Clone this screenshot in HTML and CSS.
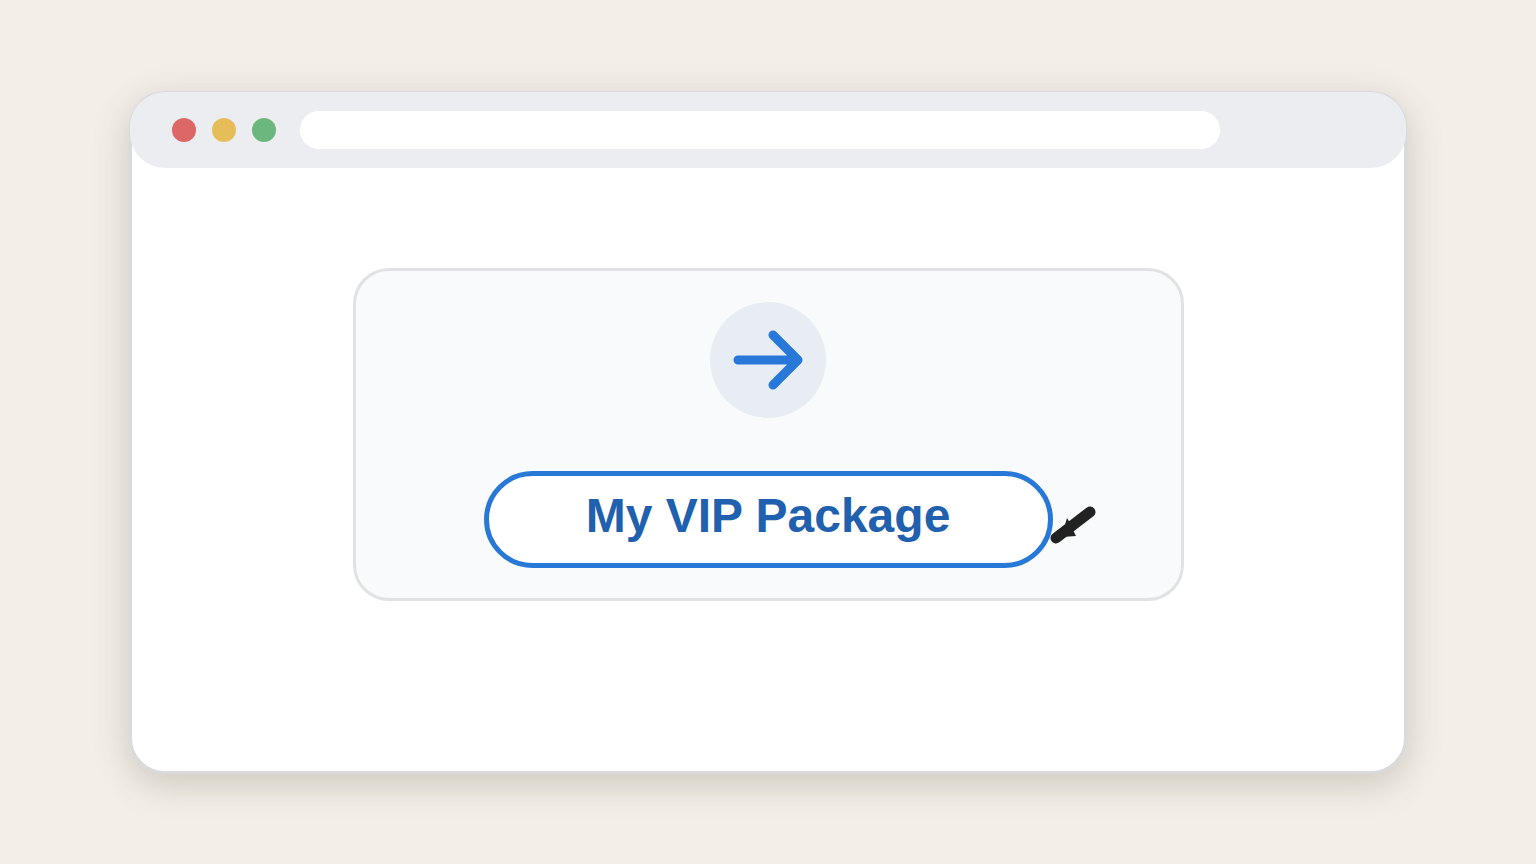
FILE: index.html
```html
<!DOCTYPE html>
<html lang="en">
<head>
  <meta charset="UTF-8" />
  <title>My VIP Package</title>
  <meta name="viewport" content="width=device-width, initial-scale=1.0" />
  <link rel="stylesheet" href="styles.css">
</head>
<body>
  <div class="window">
    <!-- Title bar -->
    <header class="title-bar">
      <div class="dots">
        <span class="dot red"></span>
        <span class="dot yellow"></span>
        <span class="dot green"></span>
      </div>
      <input type="text" class="address" aria-label="Address" />
    </header>

    <main class="content">
      <div class="card">
        <div class="badge">
          <svg viewBox="0 0 116 116" aria-hidden="true">
            <path d="M28 58H88M63 33L88 58L63 83" />
          </svg>
        </div>

        <div class="action">
          <button type="button" class="package-btn">My VIP Package</button>
          <svg class="pointer" viewBox="0 0 48 40" aria-hidden="true">
            <path class="shaft" d="M42 8L8 34" />
            <path class="head" d="M19 14L16 24L14 33L28 32L25 26L22 19Z" />
          </svg>
        </div>
      </div>
    </main>
  </div>
</body>
</html>
```
FILE: styles.css
```css
* {
  margin: 0;
  padding: 0;
  box-sizing: border-box;
  font-family: "Liberation Sans", Arial, sans-serif;
}

body {
  display: flex;
  min-height: 100vh;
  padding: 91px 129px 90px;
  background-color: #f3eee8;
}

.window {
  flex: 1;
  min-width: 0;
  background: white;
  border: 3px solid #d8dade;
  border-radius: 36px;
  box-shadow: 0 10px 36px rgba(70, 70, 30, 0.22);
}

/* The bar sits over the window border */
.title-bar {
  display: flex;
  align-items: center;
  gap: 24px;
  height: 76px;
  margin: -2px -2px 0;
  padding: 0 186px 0 42px;
  background-color: #ebedf1;
  border-radius: 35px;
}

.dots {
  display: flex;
  gap: 16px;
}

.dot {
  width: 24px;
  height: 24px;
  border-radius: 50%;
}

.red {
  background-color: #dd6666;
}

.yellow {
  background-color: #e6bd58;
}

.green {
  background-color: #6bb77d;
}

.address {
  flex: 1;
  min-width: 0;
  height: 38px;
  padding: 0 19px;
  font-size: 16px;
  background: white;
  border: none;
  border-radius: 19px;
}

.content {
  padding: 100px 24px;
}

.card {
  display: flex;
  flex-direction: column;
  align-items: center;
  gap: 53px;
  max-width: 831px;
  margin: 0 auto;
  padding: 31px 24px 30px;
  background-color: #f8fafc;
  border: 3px solid #e0e2e4;
  border-radius: 36px;
}

.badge {
  width: 116px;
  height: 116px;
  background-color: #e8edf4;
  border-radius: 50%;
}

.badge svg {
  display: block;
  fill: none;
  stroke: #2878da;
  stroke-width: 9;
  stroke-linecap: round;
  stroke-linejoin: round;
}

.action {
  position: relative;
  width: 100%;
  max-width: 569px;
}

.package-btn {
  display: block;
  width: 100%;
  height: 97px;
  padding-bottom: 8px;
  background: white;
  color: #1f60af;
  border: 5px solid #2878d8;
  border-radius: 49px;
  font-size: 48px;
  font-weight: bold;
  cursor: pointer;
}

/* Mouse pointer resting on the button edge */
.pointer {
  position: absolute;
  left: 100%;
  top: 33px;
  width: 48px;
  height: 40px;
  margin-left: -5px;
  pointer-events: none;
}

.shaft {
  fill: none;
  stroke: #222222;
  stroke-width: 11;
  stroke-linecap: round;
}

.head {
  fill: #222222;
}
```
